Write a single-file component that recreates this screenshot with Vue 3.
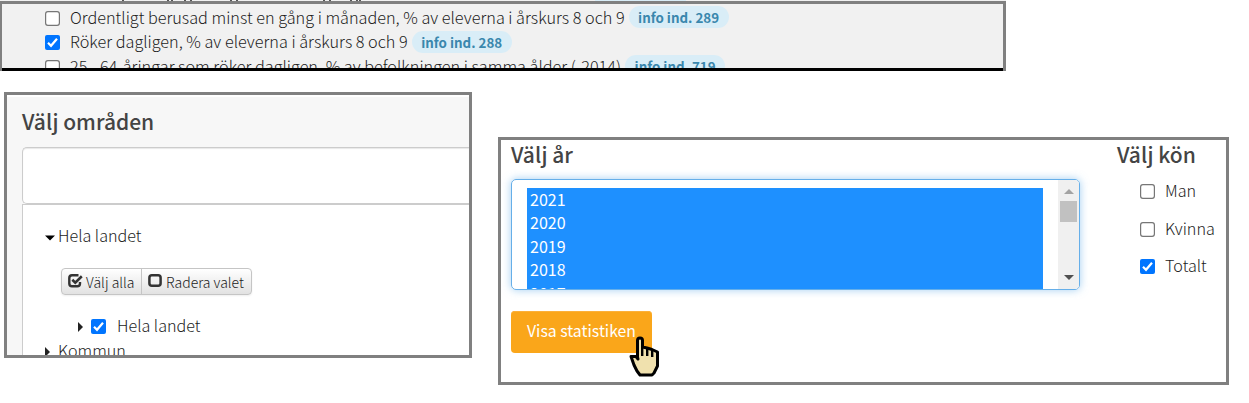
<script setup>
import { h } from 'vue'

const indicators = [
  { text: 'Ordentligt berusad minst en gång i månaden, % av eleverna i årskurs 8 och 9', tag: 'info ind. 289', checked: false },
  { text: 'Röker dagligen, % av eleverna i årskurs 8 och 9', tag: 'info ind. 288', checked: true },
  { text: '25 - 64-åringar som röker dagligen, % av befolkningen i samma ålder (-2014)', tag: 'info ind. 719', checked: false },
]
const years = ['2021', '2020', '2019', '2018', '2017']
const genders = [
  { name: 'Man', checked: false },
  { name: 'Kvinna', checked: false },
  { name: 'Totalt', checked: true },
]
// Descenders of the row scrolled out above the indicator list
const descenders = [122, 167, 171, 184, 190, 230, 236, 323, 329, 350, 356, 359]

const CheckBox = (props) =>
  h('svg', { width: 15, height: 15, viewBox: '0 0 15 15' }, props.checked
    ? [
        h('rect', { width: 15, height: 15, rx: 2, fill: '#0075ff' }),
        h('path', { d: 'M3 7.8 L6 10.8 L12 3.7', fill: 'none', stroke: '#fff', 'stroke-width': 2.2 }),
      ]
    : [h('rect', { x: 0.6, y: 0.6, width: 13.8, height: 13.8, rx: 2.3, fill: '#fff', stroke: '#767676', 'stroke-width': 1.2 })])
CheckBox.props = ['checked']
</script>

<template>
  <main class="page">
    <svg class="strip" width="1006" height="1" viewBox="0 0 1006 1">
      <rect width="1006" height="1" fill="#f1f1f1" />
      <rect x="595" width="91" height="1" fill="#d9edf7" />
      <rect v-for="x in descenders" :key="x" :x="x" width="2" height="1" fill="#555" />
    </svg>
    <section class="indicators">
      <div v-for="item in indicators" :key="item.tag" class="indicator">
        <CheckBox :checked="item.checked" />
        <span class="label">{{ item.text }}</span>
        <span class="tag">{{ item.tag }}</span>
      </div>
    </section>

    <div class="panels">
      <section class="areas">
        <h2>Välj områden</h2>
        <div class="search"></div>
        <div class="tree">
          <div class="node root">
            <svg width="10" height="6" viewBox="0 0 10 6"><path d="M0 0.5H10L5 5.5Z" fill="#000" /></svg>
            <span>Hela landet</span>
          </div>
          <div class="buttons">
            <button class="first">
              <svg width="15" height="14" viewBox="0 0 15 14" fill="none" stroke="#333">
                <path d="M10.5 1.3H4Q1.3 1.3 1.3 4V9.5Q1.3 12.3 4 12.3H9.2Q12 12.3 12 9.5V8" stroke-width="2.4" />
                <path d="M4.3 5.7L7.3 8.6L13.8 2.3" stroke-width="2.6" />
              </svg>
              <span>Välj alla</span>
            </button>
            <button class="second">
              <svg width="14" height="13" viewBox="0 0 14 13"><rect x="1.4" y="1.3" width="11.2" height="10.4" rx="2.5" fill="none" stroke="#333" stroke-width="2.5" /></svg>
              <span>Radera valet</span>
            </button>
          </div>
          <div class="node child">
            <svg width="5" height="10" viewBox="0 0 5 10"><path d="M0 0L5 5L0 10Z" fill="#222" /></svg>
            <CheckBox :checked="true" />
            <span>Hela landet</span>
          </div>
          <div class="node kommun">
            <svg width="5" height="10" viewBox="0 0 5 10"><path d="M0 0L5 5L0 10Z" fill="#222" /></svg>
            <span>Kommun</span>
          </div>
        </div>
      </section>

      <section class="filters">
        <div class="period">
          <h2>Välj år</h2>
          <div class="listbox">
            <div class="options">
              <div v-for="year in years" :key="year" class="option">{{ year }}</div>
            </div>
            <div class="scrollbar">
              <svg width="10" height="5" viewBox="0 0 10 5"><path d="M5 0L10 5H0Z" fill="#a3a3a3" /></svg>
              <div class="thumb"></div>
              <svg class="down" width="10" height="5" viewBox="0 0 10 5"><path d="M0 0H10L5 5Z" fill="#505050" /></svg>
            </div>
          </div>
          <div class="action">
            <button class="submit"><span>Visa statistiken</span></button>
            <svg class="cursor" width="32" height="42" viewBox="0 0 32 42">
              <path d="M8.5 21V4.5Q8.5 2 11 2Q13.5 2 13.5 4.5V11L18 12L23 13.5L28.5 16V30L25 37L23 39H11L8 35L5 29L2 20.5H7L9 23Z" fill="#f0e1ae" stroke="#000" stroke-width="3" stroke-linejoin="round" />
              <path d="M13.2 11V20M18.2 12V20M23.2 14V21" stroke="#000" stroke-width="2.4" />
            </svg>
          </div>
        </div>
        <div class="gender">
          <h2>Välj kön</h2>
          <div v-for="g in genders" :key="g.name" class="choice">
            <CheckBox :checked="g.checked" />
            <span>{{ g.name }}</span>
          </div>
        </div>
      </section>
    </div>
  </main>
</template>

<style>
body { margin: 0; background: #fff; }
</style>

<style scoped>
* { box-sizing: border-box; }
.page {
  width: 1249px; height: 403px; overflow: hidden;
  font-family: "Noto Sans CJK SC", "Noto Sans", sans-serif;
  font-weight: 300; font-size: 16.15px; color: #1c1c1c; white-space: nowrap;
}
h2 { margin: 0; font-size: 21px; line-height: 29px; padding-bottom: 1px; font-weight: 500; color: #444; }
svg { display: block; flex: none; }
.indicators {
  width: 1006px; height: 70px; overflow: hidden; padding: 2px 0 0 43px;
  border: solid #808080; border-width: 3px 3px 0 2px; background: #f1f1f1;
  position: relative;
}
.indicators::after { content: ""; position: absolute; left: 0; right: 0; bottom: 0; height: 3px; background: #000; }
.indicator { display: flex; align-items: center; height: 24.5px; }
.label { margin-left: 10px; line-height: 22px; padding-bottom: 3px; font-size: 16.24px; }
.tag {
  margin: -2px 0 0 4px; height: 22px; padding: 0 9.5px; border-radius: 11px; background: #d9edf7;
  color: #3a87ad; font-size: 13.35px; line-height: 24px; font-weight: 700;
}
.panels { display: flex; align-items: flex-start; padding-left: 4px; gap: 26px; margin-top: 21px; }
.areas {
  width: 468px; height: 266px; border: 3px solid #808080; background: #f7f7f7;
  padding-left: 15px; overflow: hidden; box-shadow: inset 0 2px #fff;
}
.areas h2 { margin-top: 12px; }
.search { margin-top: 10px; height: 57px; border: 1px solid #ccc; border-right: 0; border-radius: 5px 0 0 5px; background: #fff; box-shadow: inset 0 1px 1px #e8e8e8; }
.tree { height: 170px; border: 1px solid #ccc; border-right: 0; background: #fff; padding: 19px 0 0 22px; }
.node { display: flex; align-items: center; height: 24px; }
.node span { padding-bottom: 2px; }
.root svg { margin-top: 4px; }
.root span { margin-left: 3px; }
.buttons { display: flex; width: 191px; height: 27px; margin: 20px 0 0 16px; border: 1px solid #c5c5c5; border-radius: 4px; background: linear-gradient(#fff, #e2e2e2); box-shadow: 0 1px 2px #0001; }
.buttons button { display: flex; align-items: center; padding: 0 0 0 6px; border: 0; background: none; font: inherit; font-size: 14px; color: #222; }
.buttons .first { width: 79px; }
.buttons .second { flex: 1; border-left: 1px solid #c5c5c5; }
.buttons svg { margin-top: -2px; }
.buttons span { margin-left: 3px; }
.buttons .second span { margin-left: 4px; }
.child { margin: 19px 0 0 33px; }
.child > :first-child { margin-top: 2px; }
.child > :nth-child(2) { margin-left: 8px; }
.child span { margin-left: 11px; }
.kommun svg { margin-top: 4px; }
.kommun span { margin-left: 8px; padding-bottom: 0; }
.filters { display: flex; width: 731px; height: 248px; margin-top: 45px; border: 3px solid #808080; padding: 0 0 0 10px; }
.period { width: 569px; }
.listbox { display: flex; height: 111px; margin-top: 9px; border: 1px solid #66afe9; border-radius: 5px; padding: 8px 0 0 15px; overflow: hidden; box-shadow: 0 0 8px rgba(102,175,233,.6); }
.options { width: 516px; height: 101px; overflow: hidden; background: #1e90ff; color: #fff; font-weight: 400; font-size: 16px; }
.option { height: 23.4px; line-height: 22.4px; padding-left: 3px; }
.scrollbar { width: 21px; height: 109px; margin: -8px 0 0 15px; padding-top: 9px; background: #f0f0f0; display: flex; flex-direction: column; align-items: center; }
.thumb { width: 17px; height: 21px; margin-top: 7px; background: #c1c1c1; }
.down { margin-top: 53px; }
.action { position: relative; margin-top: 21px; }
.submit { width: 141px; height: 42px; padding: 0 0 3px 16px; border: 0; border-radius: 4px; background: #faa61a; color: #fff; font: inherit; font-size: 15.8px; font-weight: 400; text-align: left; box-shadow: inset 0 1px #fbb03a; }
.cursor { position: absolute; left: 118px; top: 25px; }
.gender { margin-left: 37px; }
.choice { display: flex; align-items: center; height: 37.5px; padding-left: 23px; }
.choice span { margin-left: 10px; padding-bottom: 3px; }
h2 + .choice { margin-top: 3px; }
</style>
